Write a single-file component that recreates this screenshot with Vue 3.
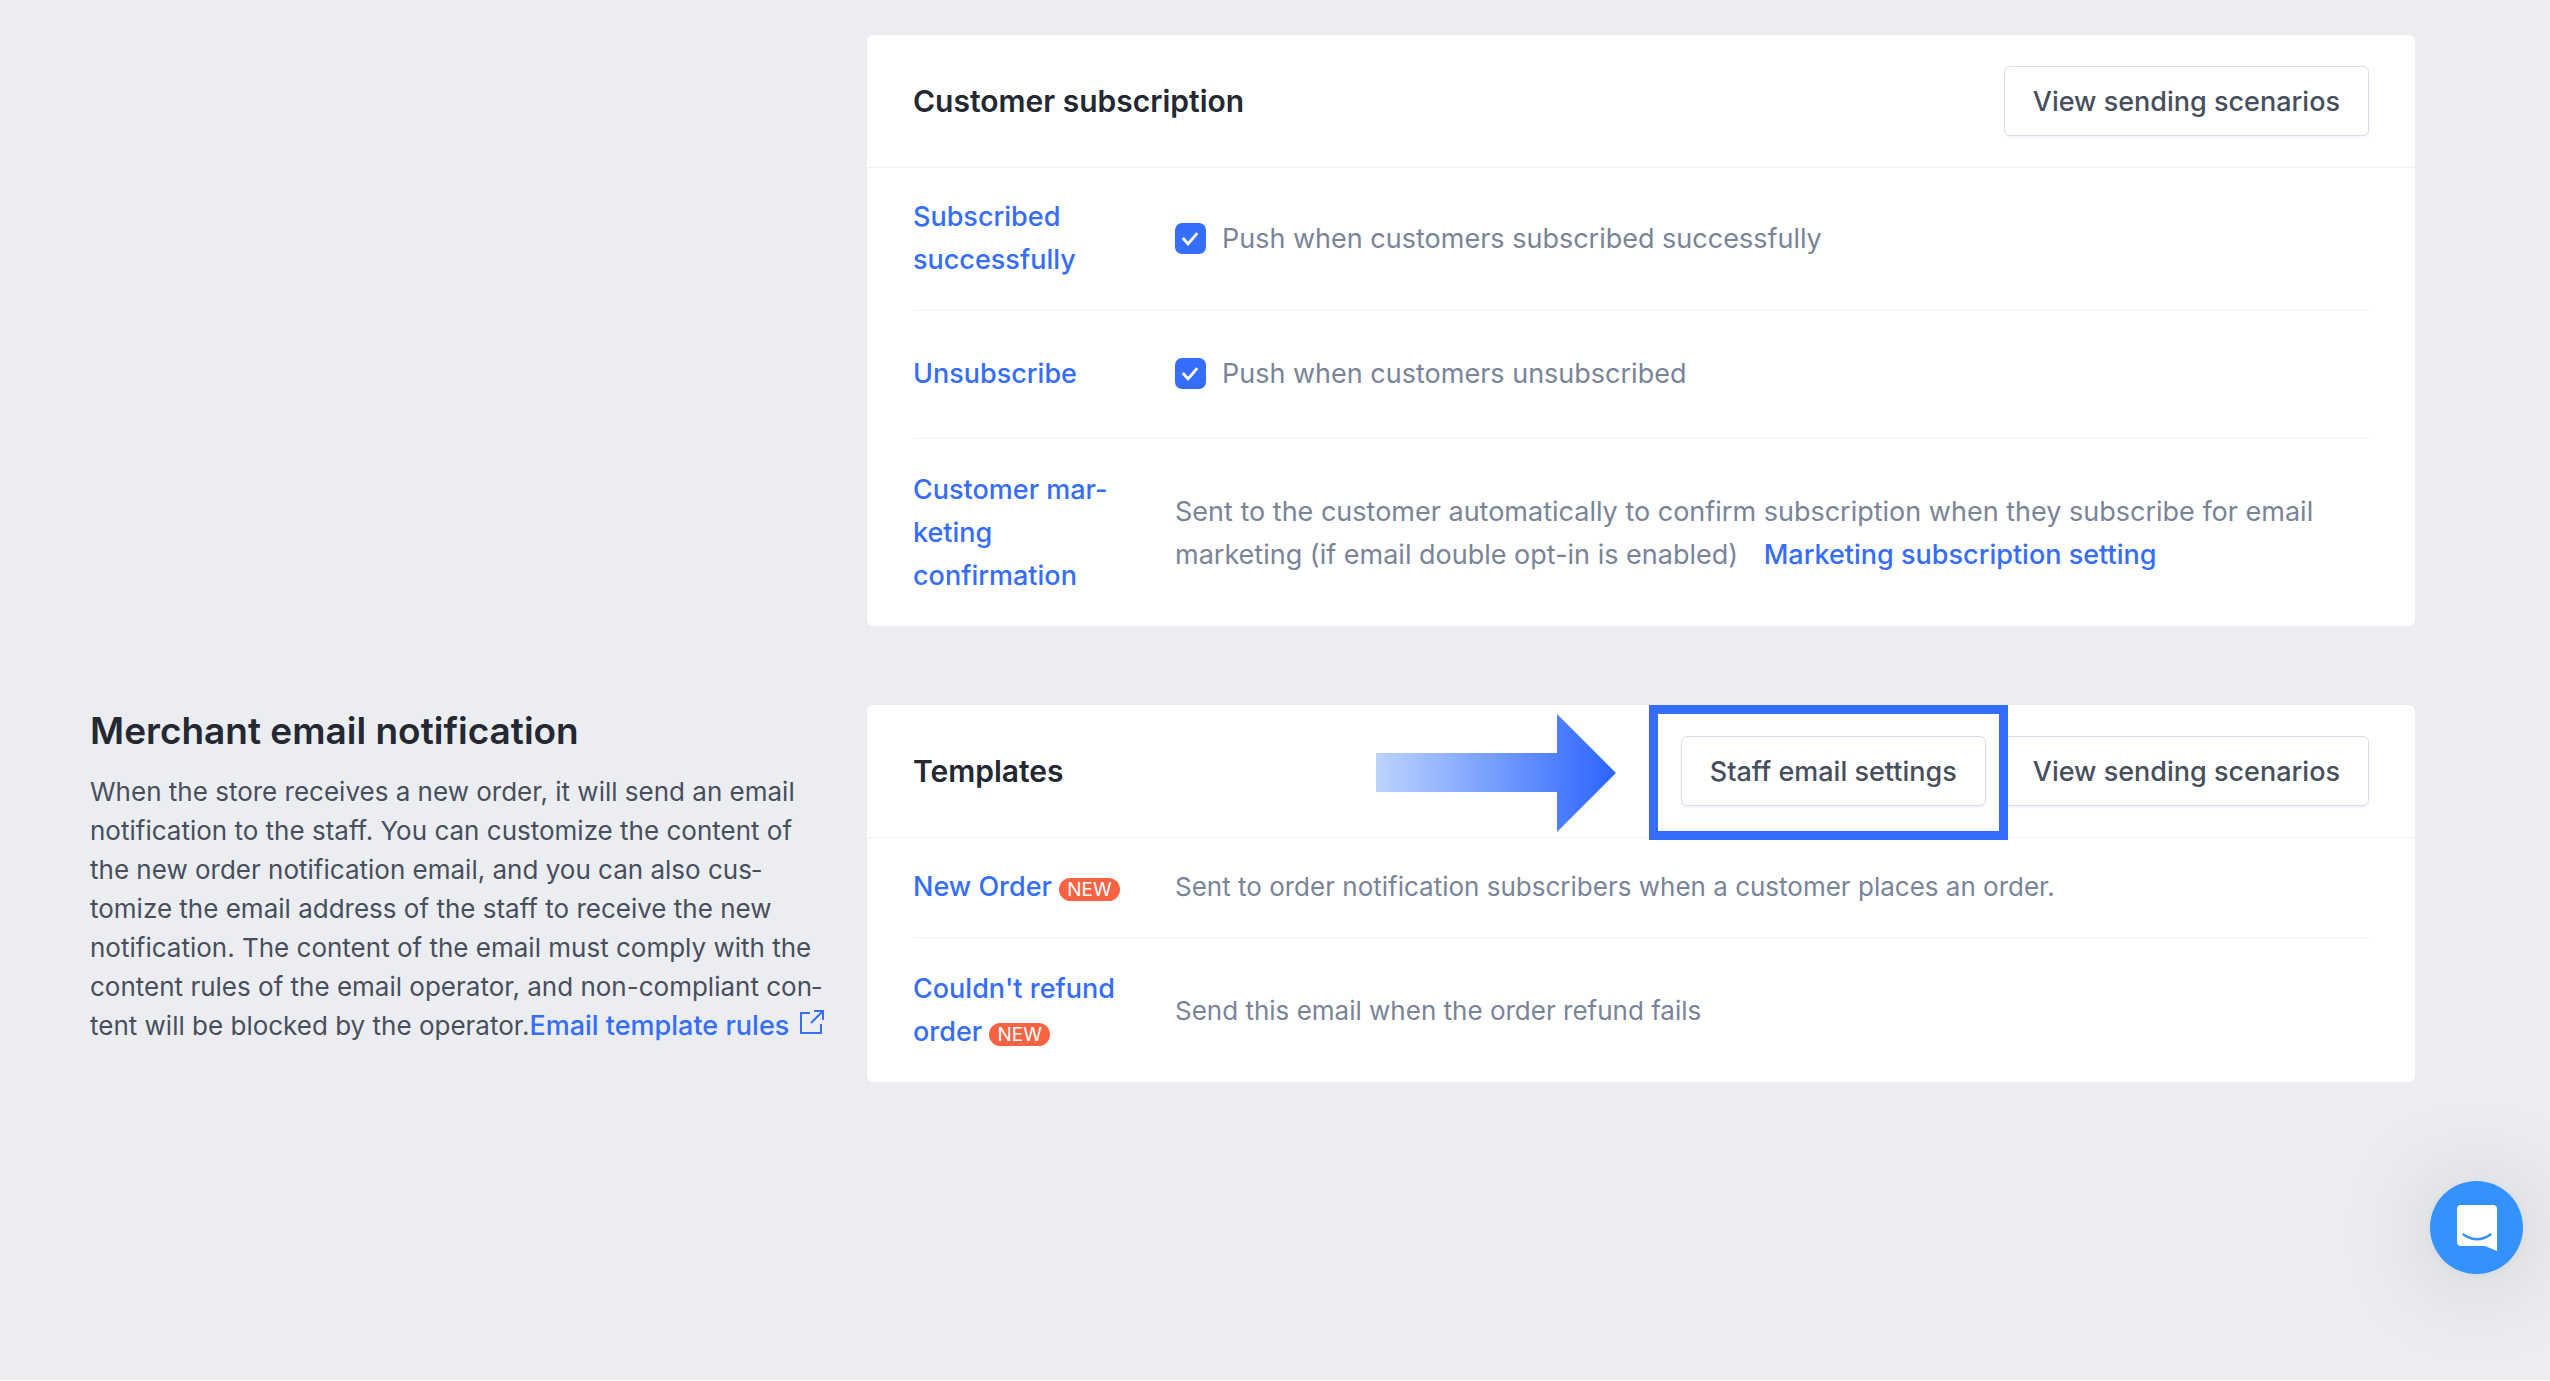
<script setup>
import { ref } from 'vue'

const subscribed = ref(true)
const unsubscribed = ref(true)
</script>

<template>
  <main class="page">
    <div class="layout">
      <section class="card customer" aria-labelledby="customer-title">
        <header class="card-head">
          <h3 id="customer-title">Customer subscription</h3>
          <div class="actions">
            <button type="button" class="btn">View sending scenarios</button>
          </div>
        </header>
        <ul class="rows">
          <li class="row">
            <a href="#" class="name">Subscribed successfully</a>
            <label class="check">
              <span class="box">
                <input v-model="subscribed" type="checkbox" />
                <svg v-if="subscribed" viewBox="0 0 32 32" aria-hidden="true"><path d="M8 15.500l5.500 6 9.500-11" /></svg>
              </span>
              Push when customers subscribed successfully
            </label>
          </li>
          <li class="row tall">
            <a href="#" class="name">Unsubscribe</a>
            <label class="check">
              <span class="box">
                <input v-model="unsubscribed" type="checkbox" />
                <svg v-if="unsubscribed" viewBox="0 0 32 32" aria-hidden="true"><path d="M8 15.500l5.500 6 9.500-11" /></svg>
              </span>
              Push when customers unsubscribed
            </label>
          </li>
          <li class="row">
            <a href="#" class="name">Customer mar&shy;keting confirmation</a>
            <p class="desc">
              Sent to the customer automatically to confirm subscription when they subscribe for email
              marketing (if email double opt-in is enabled)
              <a href="#" class="inline-link">Marketing subscription setting</a>
            </p>
          </li>
        </ul>
      </section>

      <section class="intro">
        <h2>Merchant email notification</h2>
        <p>
          When the store receives a new order, it will send an email notification to the staff. You can
          customize the content of the new order notification email, and you can also cus&shy;tomize the
          email address of the staff to receive the new notification. The content of the email must comply
          with the content rules of the email operator, and non-compliant con&shy;tent will be blocked by
          the operator.<a href="#">Email template rules<svg class="external" viewBox="0 0 26 26" aria-hidden="true"><path d="M11 4H2v20h20v-9M15 2h9v9M24 2L12 14" /></svg></a>
        </p>
      </section>

      <section class="card templates" aria-labelledby="templates-title">
        <header class="card-head">
          <h3 id="templates-title">Templates</h3>
          <div class="actions">
            <div class="callout">
              <button type="button" class="btn">Staff email settings</button>
              <svg class="arrow" viewBox="0 0 240 118" aria-hidden="true">
                <defs>
                  <linearGradient id="arrow-fill" x1="0" x2="1" y1="0" y2="0">
                    <stop offset="0" stop-color="#bdd4ff" />
                    <stop offset="1" stop-color="#2b64ff" />
                  </linearGradient>
                </defs>
                <path d="M0 39H181V0L240 59L181 118V78H0Z" fill="url(#arrow-fill)" />
              </svg>
            </div>
            <button type="button" class="btn">View sending scenarios</button>
          </div>
        </header>
        <ul class="rows">
          <li class="row">
            <a href="#" class="name">New Order <span class="badge">NEW</span></a>
            <p class="desc">Sent to order notification subscribers when a customer places an order.</p>
          </li>
          <li class="row">
            <a href="#" class="name">Couldn't refund order <span class="badge">NEW</span></a>
            <p class="desc">Send this email when the order refund fails</p>
          </li>
        </ul>
      </section>
    </div>

    <button type="button" class="chat" aria-label="Open chat">
      <svg viewBox="0 0 42 48" aria-hidden="true">
        <path d="M5 1H37Q41 1 41 5V47L29 42H5Q1 42 1 38V5Q1 1 5 1Z" fill="#fff" />
        <path d="M7.500 30.500Q21 40 34.500 30.500" fill="none" stroke="#3392fd" stroke-width="2.500" stroke-linecap="round" />
      </svg>
    </button>
  </main>
</template>

<style>
body {
  background: #fff;
}
</style>

<style scoped>
.page {
  box-sizing: border-box;
  min-height: calc(100vh - 1px);
  padding: 35px 135px 35px 90px;
  background: #ebedf1;
  color: #474f5e;
  font-family: Inter, "Liberation Sans", sans-serif;
  font-size: 27px;
  line-height: 43px;
}

.layout {
  display: grid;
  grid-template-columns: 777px minmax(0, 1fr);
  row-gap: 79px;
  align-items: start;
}

h2,
h3,
p,
ul {
  margin: 0;
  padding: 0;
}

a {
  color: #356dff;
  font-size: 27px;
  font-weight: 500;
  text-decoration: none;
}

.card {
  background: #fff;
  border-radius: 6px;
}

.customer {
  grid-column: 2;
}

.card-head {
  display: flex;
  align-items: center;
  justify-content: space-between;
  height: 132px;
  padding: 0 46px;
  border-bottom: 1px solid #eef0f2;
}

h3 {
  color: #242833;
  font-size: 30px;
  font-weight: 600;
}

.actions {
  display: flex;
  gap: 18px;
}

.btn {
  box-sizing: border-box;
  height: 70px;
  padding: 0 28px;
  border: 1px solid #d9dde9;
  border-radius: 6px;
  background: #fff;
  box-shadow: 0 2px 2px #f5f6f9;
  color: #474f5e;
  font: inherit;
  font-weight: 500;
  white-space: nowrap;
}

.rows {
  padding: 0 46px;
  list-style: none;
}

.row {
  display: grid;
  grid-template-columns: 216px minmax(0, 1fr);
  column-gap: 46px;
  align-items: center;
  box-sizing: border-box;
  padding: 27px 0 29px;
  border-bottom: 1px solid #f0f1f6;
}

.row:last-child {
  padding: 29px 0;
  border-bottom: 0;
}

.tall {
  min-height: 128px;
}

.desc,
.check {
  color: #7a8499;
}

.templates .desc {
  font-size: 26px;
}

.check {
  display: flex;
  align-items: center;
  gap: 16px;
}

.box {
  display: grid;
  width: 31px;
  height: 31px;
}

.box > * {
  grid-area: 1 / 1;
  width: 100%;
  height: 100%;
}

.box input {
  margin: 0;
  border: 2px solid #c5cbd9;
  border-radius: 7px;
  appearance: none;
}

.box input:checked {
  border-color: #356dff;
  background: #356dff;
}

.box svg {
  fill: none;
  stroke: #fff;
  stroke-width: 3;
  pointer-events: none;
}

.inline-link {
  margin-left: 18px;
}

.badge {
  display: inline-block;
  height: 23px;
  padding: 0 8px;
  border-radius: 12px;
  background: #fa6342;
  color: #fff;
  font-size: 19px;
  font-weight: 400;
  line-height: 23px;
}

.intro {
  padding-right: 34px;
  font-size: 26px;
  line-height: 39px;
}

.intro a {
  white-space: nowrap;
}

.intro h2 {
  margin-bottom: 15px;
  color: #242833;
  font-size: 37px;
  font-weight: 600;
  line-height: 52px;
}

.external {
  width: 26px;
  height: 26px;
  margin-left: 10px;
  fill: none;
  stroke: #356dff;
  stroke-width: 2;
}

.callout {
  position: relative;
}

.callout::after {
  content: "";
  position: absolute;
  inset: -31px -22px -34px -32px;
  border: 9px solid #356dff;
  pointer-events: none;
}

.arrow {
  position: absolute;
  top: -22px;
  right: calc(100% + 65px);
  width: 240px;
  height: 118px;
}

.chat {
  position: fixed;
  right: 27px;
  bottom: 107px;
  display: grid;
  place-items: center;
  width: 93px;
  height: 93px;
  padding: 0;
  border: 0;
  border-radius: 50%;
  background: #3392fd;
  box-shadow: 0 2px 12px rgba(0, 0, 0, 0.06), 0 4px 100px rgba(0, 0, 0, 0.16);
}

.chat svg {
  width: 42px;
  height: 48px;
}
</style>
